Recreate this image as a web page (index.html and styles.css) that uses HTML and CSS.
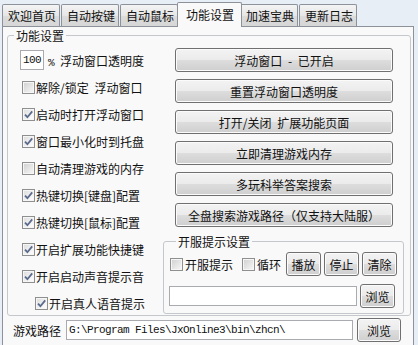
FILE: index.html
```html
<!DOCTYPE html>
<html lang="zh-CN">
<head>
<meta charset="utf-8">
<title>功能设置</title>
<link rel="stylesheet" href="styles.css">
</head>
<body>
<div class="tabs">
  <div class="tab">欢迎首页</div>
  <div class="tab">自动按键</div>
  <div class="tab">自动鼠标</div>
  <div class="tab tab-active">功能设置</div>
  <div class="tab">加速宝典</div>
  <div class="tab">更新日志</div>
</div>
<div class="page">
  <div class="group">
    <div class="group-title">功能设置</div>
    <div class="group-body">
      <div class="left-col">
        <div class="row">
          <span class="textbox small mono">100</span>
          <span class="pct"><span class="mono pct-sym">%</span>浮动窗口透明度</span>
        </div>
        <div class="row"><span class="cb"></span><span class="lbl">解除/锁定 浮动窗口</span></div>
        <div class="row"><span class="cb checked"><svg viewBox="0 0 11 11"><path d="M2 5.6 L4.4 8.2 L9.2 2.4"/></svg></span><span class="lbl">启动时打开浮动窗口</span></div>
        <div class="row"><span class="cb checked"><svg viewBox="0 0 11 11"><path d="M2 5.6 L4.4 8.2 L9.2 2.4"/></svg></span><span class="lbl">窗口最小化时到托盘</span></div>
        <div class="row"><span class="cb"></span><span class="lbl">自动清理游戏的内存</span></div>
        <div class="row"><span class="cb checked"><svg viewBox="0 0 11 11"><path d="M2 5.6 L4.4 8.2 L9.2 2.4"/></svg></span><span class="lbl">热键切换[键盘]配置</span></div>
        <div class="row"><span class="cb checked"><svg viewBox="0 0 11 11"><path d="M2 5.6 L4.4 8.2 L9.2 2.4"/></svg></span><span class="lbl">热键切换[鼠标]配置</span></div>
        <div class="row"><span class="cb checked"><svg viewBox="0 0 11 11"><path d="M2 5.6 L4.4 8.2 L9.2 2.4"/></svg></span><span class="lbl">开启扩展功能快捷键</span></div>
        <div class="row"><span class="cb checked"><svg viewBox="0 0 11 11"><path d="M2 5.6 L4.4 8.2 L9.2 2.4"/></svg></span><span class="lbl">开启启动声音提示音</span></div>
        <div class="row indent"><span class="cb checked"><svg viewBox="0 0 11 11"><path d="M2 5.6 L4.4 8.2 L9.2 2.4"/></svg></span><span class="lbl">开启真人语音提示</span></div>
      </div>
      <div class="right-col">
        <div class="btn-list">
          <div class="btn wide">浮动窗口 - 已开启</div>
          <div class="btn wide">重置浮动窗口透明度</div>
          <div class="btn wide">打开/关闭 扩展功能页面</div>
          <div class="btn wide">立即清理游戏内存</div>
          <div class="btn wide">多玩科举答案搜索</div>
          <div class="btn wide">全盘搜索游戏路径（仅支持大陆服）</div>
        </div>
        <div class="subgroup">
          <div class="group-title sub-title">开服提示设置</div>
          <div class="sub-row1">
            <span class="cb first"></span><span class="lbl lbl-sub">开服提示</span>
            <span class="cb second"></span><span class="lbl lbl-sub">循环</span>
            <div class="btn small-btn play">播放</div>
            <div class="btn small-btn">停止</div>
            <div class="btn small-btn">清除</div>
          </div>
          <div class="sub-row2">
            <span class="textbox sound"></span>
            <div class="btn small-btn browse1">浏览</div>
          </div>
        </div>
      </div>
    </div>
  </div>
  <div class="path-row">
    <span class="path-label">游戏路径</span>
    <span class="textbox path mono">G:\Program Files\JxOnline3\bin\zhcn\</span>
    <div class="btn browse2">浏览</div>
  </div>
</div>
</body>
</html>
```

FILE: styles.css
```css
html, body {
  margin: 0;
  padding: 0;
}
body {
  width: 418px;
  height: 345px;
  overflow: hidden;
  background: #e7eef6;
  font-family: "Noto Sans CJK SC", "Noto Sans", sans-serif;
  font-size: 12px;
  color: #111;
  word-spacing: 3px;
}
.mono {
  font-family: "Liberation Mono", "DejaVu Sans Mono", monospace;
  font-size: 11px;
  letter-spacing: -0.6px;
  word-spacing: 0;
}

/* tabs */
.tabs {
  display: flex;
  align-items: flex-end;
  height: 26px;
  padding-left: 2px;
}
.tab {
  box-sizing: border-box;
  height: 22px;
  line-height: 21px;
  padding: 0 3px 0 5px;
  margin-right: 1px;
  border: 1px solid #8d9199;
  border-bottom: none;
  border-radius: 2px 2px 0 0;
  background: linear-gradient(#f4f4f4, #e6e6e6 50%, #dcdcdc 51%, #d6d6d6);
  white-space: nowrap;
}
.tab-active {
  position: relative;
  z-index: 1;
  height: 25px;
  line-height: 24px;
  margin: 0 -2px -1px -2px;
  padding: 0 7px 0 8px;
  background: #f9f9f9;
}

/* page */
.page {
  margin: 0 4px 0 2px;
  height: 330px;
  border: 1px solid #8d9199;
  background: #f9f9f9;
}

/* group boxes */
.group {
  margin: 8px 2px 0 4px;
  padding: 0 0 1px 0;
  border: 1px solid #c4c8cc;
  border-radius: 3px;
}
.group-title {
  width: fit-content;
  margin: -7px 0 0 6px;
  padding: 0 2px;
  line-height: 14px;
  background: #f9f9f9;
}
.group-body {
  display: flex;
}
.left-col {
  width: 143px;
  padding: 7px 0 0 12px;
  display: flex;
  flex-direction: column;
  gap: 7px;
}
.row {
  display: flex;
  align-items: center;
  height: 20px;
  white-space: nowrap;
}
.textbox {
  box-sizing: border-box;
  display: inline-flex;
  align-items: center;
  height: 20px;
  border: 1px solid #a9abb0;
  background: #fff;
}
.textbox.small {
  width: 24px;
  padding-left: 2px;
}
.pct {
  margin-left: 4px;
}
.pct-sym {
  margin-right: 6px;
}
.cb {
  box-sizing: border-box;
  display: inline-flex;
  align-items: center;
  justify-content: center;
  width: 13px;
  height: 13px;
  margin-left: 2px;
  border: 1px solid #8e8f8f;
  background: linear-gradient(135deg, #cfcfcf, #f2f2f2 85%);
  box-shadow: inset 0 0 0 1px #f6f6f6;
  flex: none;
}
.cb.checked {
  background: linear-gradient(135deg, #dcdcdc, #fbfbfb 85%);
}
.cb svg {
  width: 11px;
  height: 11px;
  fill: none;
  stroke: #5a6a8c;
  stroke-width: 1.8;
}
.lbl {
  margin-left: 1px;
}
.row.indent .cb {
  margin-left: 15px;
}

/* right column */
.right-col {
  flex: 1;
  padding: 5px 6px 0 0;
}
.btn-list {
  display: flex;
  flex-direction: column;
  gap: 7px;
}
.btn {
  box-sizing: border-box;
  display: flex;
  align-items: center;
  justify-content: center;
  height: 24px;
  border: 1px solid #707070;
  border-radius: 3px;
  background: linear-gradient(#f3f3f3, #ebebeb 50%, #dddddd 51%, #cfcfcf);
  box-shadow: inset 0 0 0 1px #fbfbfb;
  white-space: nowrap;
}
.btn.wide {
  width: 218px;
  margin-left: 12px;
}
.subgroup {
  margin-top: 14px;
  padding: 0 0 5px 5px;
  border: 1px solid #c4c8cc;
  border-radius: 3px;
}
.sub-title {
  margin-left: 7px;
}
.sub-row1 {
  display: flex;
  align-items: center;
  height: 24px;
  margin-top: 3px;
}
.sub-row1 .cb.first {
  margin-left: 1px;
}
.sub-row1 .cb.second {
  margin-left: 9px;
}
.lbl-sub {
  margin-left: 2px;
}
.small-btn {
  width: 35px;
  margin-left: 3px;
}
.small-btn.play {
  margin-left: 5px;
}
.sub-row2 {
  display: flex;
  align-items: center;
  margin-top: 8px;
}
.textbox.sound {
  width: 188px;
}

/* bottom row */
.path-row {
  display: flex;
  align-items: center;
  margin-top: 2px;
  padding-left: 10px;
}
.textbox.path {
  width: 287px;
  margin-left: 5px;
  padding-left: 2px;
  white-space: nowrap;
  overflow: hidden;
}
.btn.browse2 {
  width: 44px;
  margin-left: 4px;
}
```
